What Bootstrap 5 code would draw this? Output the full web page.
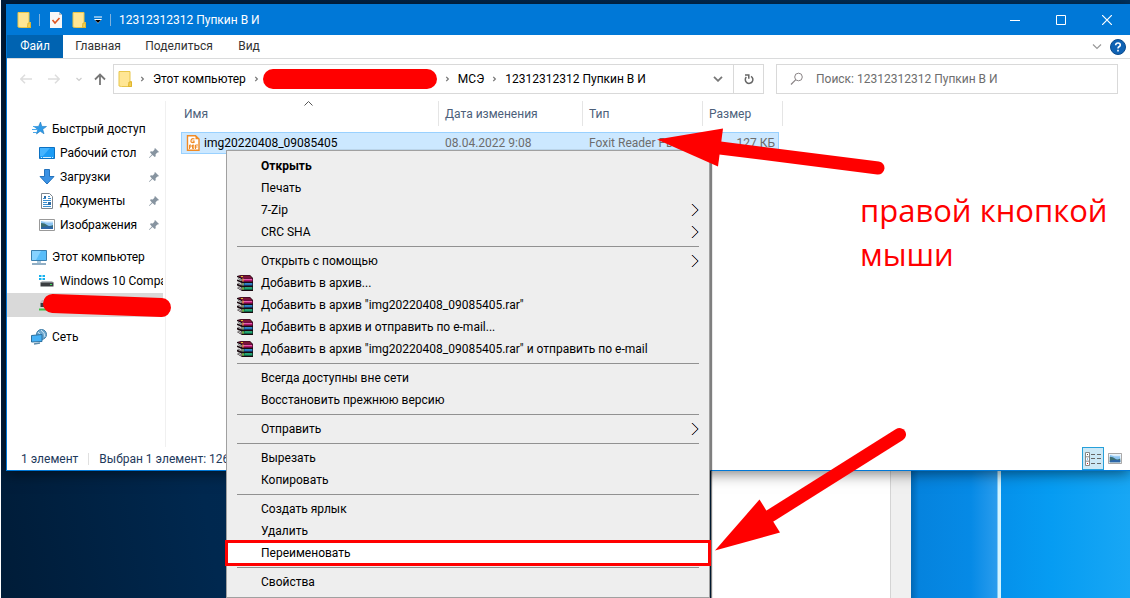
<!DOCTYPE html>
<html lang="ru">
<head>
<meta charset="utf-8">
<meta name="viewport" content="width=device-width, initial-scale=1">
<title>12312312312 Пупкин В И</title>
<link href="https://cdn.jsdelivr.net/npm/bootstrap@5.3.0/dist/css/bootstrap.min.css" rel="stylesheet">
<script src="https://cdn.jsdelivr.net/npm/bootstrap@5.3.0/dist/js/bootstrap.bundle.min.js"></script>
<style>
  body { font-family: Roboto, "Open Sans", sans-serif; font-size: 12px; line-height: 16px; color: #000; }
  a { color: inherit; text-decoration: none; }
  svg { display: block; flex: none; }
  button { border: 0; background: none; padding: 0; color: inherit; }

  .desktop { min-height: 100vh; background: linear-gradient(90deg, #001d3d, #003463); border-left: 1px solid #fff; padding-top: 4px; }
  .explorer { margin-left: 5px; background: #fff; border: solid #0078d7; border-width: 0 0 1px 1px; box-shadow: 0 2px 14px rgba(0, 0, 0, .55); z-index: 1; }

  .titlebar { height: 31px; background: #0078d7; color: #fff; padding-left: 10px; }
  .titlebar .tick { width: 1px; height: 12px; background: #7fb2de; }
  .win-btn { width: 46px; height: 31px; }

  .ribbon { height: 24px; border-bottom: 1px solid #dadbdc; color: #333; }
  .ribbon a { line-height: 23px; text-align: center; }
  .tab-file { width: 56px; background: #0063b1; color: #fff; }
  .tab-home { width: 70px; }
  .tab-share { width: 92px; }
  .tab-view { width: 48px; }

  .addressrow { padding: 5px 12px 7px 11px; }
  .arrows { width: 95px; padding-left: 2px; }
  .pathbox { height: 30px; width: 651px; border: 1px solid #d9d9d9; }
  .pathbox .refresh { width: 30px; border-left: 1px solid #d9d9d9; }
  .pathbox .drop { width: 30px; }
  .redacted { width: 174px; height: 20px; border-radius: 10px; background: #f00; }
  .searchbox { height: 30px; border: 1px solid #d9d9d9; margin-left: 12px; padding-left: 13px; }
  .searchbox input { border: 0; outline: 0; padding: 0; color: #6d6d6d; background: none; }
  .searchbox input::placeholder { color: #6d6d6d; opacity: 1; }

  .navpane { width: 159px; border-right: 1px solid #f0f0f0; padding-top: 16px; }
  .navpane ul { margin: 0 0 8px; }
  .navpane li { height: 24px; padding-left: 24px; margin-right: 2px; overflow: hidden; white-space: nowrap; }
  .navpane li.sub { padding-left: 32px; }
  .navpane li.current { background: #d9d9d9; }
  .navpane li a { margin-left: 5px; }
  .navpane .pin { width: 10px; margin-right: 4px; }

  .files { width: 602px; table-layout: fixed; margin-left: 15px; border-collapse: separate; border-spacing: 0; }
  .files th { height: 25px; padding: 0 6px; font-weight: 400; color: #4c607a; border-right: 1px solid #e5e5e5; position: relative; }
  .files th:first-child { padding-left: 3px; }
  .files .sort { position: absolute; left: 50%; top: 0; margin-left: -6px; }
  .files .spacer td { height: 6px; padding: 0; }
  .files .picked td { height: 22px; padding: 0 6px; color: #6d6d6d; background: #cce8ff; border: solid #99d1ff; border-width: 1px 0; }
  .files .picked td:first-child { border-left-width: 1px; color: #000; padding-left: 4px; }
  .files .picked td.size { border-right-width: 1px; padding-right: 3px; }
  .files .picked td.rest { background: none; border: 0; padding: 0; }

  .statusbar { height: 23px; color: #1e395b; padding-left: 14px; }
  .statusbar .rule { width: 1px; height: 12px; background: #e0e0e0; margin: 0 10px; }
  .view-btn { width: 22px; height: 23px; }
  .view-btn.on { background: #cce8f6; border: 1px solid #26a0da; }

  .behind { height: 127px; }
  .night { width: 710px; background: linear-gradient(80deg, #001c38, #00284f 30%, #00305c); }
  .page-edge { width: 180px; background: #fff; border-right: 1px solid #d4d4d4; }
  .scroller { width: 20px; background: #f0f0f0; }
  .glow { background: linear-gradient(90deg, #0168b5 0, #0583de 8px, #068ae6 60px, #2a9ced 86px, #d3f4ff 87px, #d3f4ff 90px, #0591eb 90px, #069cf2 140px, #18a7f5 100%); }

  .ctx { position: absolute; left: 226px; top: 150px; width: 484px; padding: 4px 0; background: #eee; border: 1px solid #a0a0a0; box-shadow: 2px 0 1px rgba(0, 0, 0, .5); z-index: 2; }
  .ctx button { display: flex; align-items: center; width: 100%; height: 22px; padding: 0 10px; text-align: left; white-space: nowrap; }
  .ctx .pic { width: 24px; flex: none; }
  .ctx hr { margin: 3px 10px; border-top: 1px solid #919191; opacity: 1; }
  .ctx .marked { background: #fff; outline: 3px solid #f00; outline-offset: -1px; }

  .note { position: absolute; left: 860px; top: 188px; width: 270px; font-family: "Open Sans", sans-serif; font-size: 31px; line-height: 44px; color: #f00; z-index: 3; }
  .mark-over { position: absolute; z-index: 3; }
  .mark-nav { left: 42px; top: 293px; }
  .mark-top { left: 650px; top: 120px; }
  .mark-low { left: 710px; top: 420px; }
</style>
</head>
<body>

<svg width="0" height="0" class="position-absolute" aria-hidden="true">
  <defs>
    <symbol id="folder" viewBox="0 0 14 16">
      <path d="M1 .5h11v10h1.500V15.500H3.500L1 15z" fill="#ffe694" stroke="#e8c64b"/>
      <path d="M11 11h2.500v4.500h-3z" fill="#f4cf53" stroke="#dfb530"/>
    </symbol>
    <symbol id="crumb" viewBox="0 0 6 8"><path d="M1.500 1.500 4 4 1.500 6.500" fill="none" stroke="#777" stroke-width="1.500"/></symbol>
    <symbol id="pinned" viewBox="0 0 10 10"><path d="M6 0l4 4-1 .6-.6-.2L6.600 6.200l.1 2-1 .8-2.200-2L.4 10l-.4-.4L2.900 6.400 1 4.300l.8-1 2 .1L5.600 1.600 5.400 1z" fill="#8794a0"/></symbol>
    <symbol id="more" viewBox="0 0 8 14">
      <path d="M.5 1l6 6-6 6" fill="none" stroke="#e8a25c"/>
      <path d="M1.500 1l6 6-6 6" fill="none" stroke="#5aa9e8"/>
      <path d="M1 1l6 6-6 6" fill="none" stroke="#3a2a3c"/>
    </symbol>
    <symbol id="books" viewBox="0 0 16 16">
      <path d="M0 1 4 0h9l3 3v13H5L0 13z" fill="#1a0a10"/>
      <path d="M1 1l3-.5h9L15 3H5z" fill="#7c1238"/>
      <path d="M0 2l4.500 2v2L0 4.500zM0 6l4.500 2v2.500L0 8.500zM0 10.500 4.500 12.500V15L0 12.500z" fill="#e9e9e9"/>
      <path d="M1 3.500l3 1.500M1 8l3 1.500M1 12l3 1.500" stroke="#333" stroke-width=".7"/>
      <path d="M5 3.500h10.500v3H5z" fill="#b3156c"/><path d="M6 4h9v1H6z" fill="#e25fae"/>
      <path d="M5 8h10.500v2.500H5z" fill="#1560a8"/><path d="M8 8.500h7v.8H8z" fill="#57aee8"/>
      <path d="M5 12.200h10.500v2.500H5z" fill="#0d8a5c"/><path d="M8 12.500h7v.8H8z" fill="#4fd6a0"/>
      <path d="M5.500 3.500h1v3h-1zM5.500 8h1v2.500h-1zM5.500 12.200h1v2.500h-1zM4 1h2v1H4z" fill="#d9c52c"/>
    </symbol>
    <symbol id="photo" viewBox="0 0 16 12">
      <path d="M.5.5h15v11H.5z" fill="#fff" stroke="#999"/>
      <path d="M2 2h12v8H2z" fill="#8cc4f2"/><path d="M2 4q4 0 6 2t6 0v4H2z" fill="#3d6f72"/><path d="M2 8.500q6-2 12-.5v2H2z" fill="#2c66a8"/><path d="M2 2h12v1.500H7z" fill="#d9edfb"/>
    </symbol>
  </defs>
</svg>

<div class="desktop position-relative d-flex flex-column overflow-hidden">
  <main class="explorer position-relative d-flex flex-column flex-grow-1">

    <header class="titlebar d-flex align-items-center">
      <svg width="14" height="16"><use href="#folder"/></svg>
      <span class="tick ms-2"></span>
      <svg class="ms-2 me-2" width="16" height="16" viewBox="0 0 16 16"><path d="M2 0h9l3 3v13H2z" fill="#f7f7f7"/><path d="M11 0v3h3" fill="#bbb"/><path d="M4.500 8l2.500 3 4.500-5" fill="none" stroke="#e0531f" stroke-width="1.600"/></svg>
      <svg width="14" height="16"><use href="#folder"/></svg>
      <svg class="ms-2" width="8" height="8" viewBox="0 0 8 8"><path d="M0 1h8" stroke="#fff"/><path d="M0 3h8L4 7.500z" fill="#fff"/><path d="M1 4h6L4 7z" fill="#000"/></svg>
      <span class="tick mx-2"></span>
      <span>12312312312 Пупкин В И</span>
      <div class="d-flex ms-auto">
        <button class="win-btn d-flex align-items-center justify-content-center" aria-label="Свернуть"><svg width="10" height="10"><path d="M0 5.500h10" stroke="#fff"/></svg></button>
        <button class="win-btn d-flex align-items-center justify-content-center" aria-label="Развернуть"><svg width="10" height="10"><path d="M.5.5h9v9h-9z" fill="none" stroke="#fff"/></svg></button>
        <button class="win-btn d-flex align-items-center justify-content-center" aria-label="Закрыть"><svg width="10" height="10"><path d="M0 0l10 10M10 0 0 10" stroke="#fff" stroke-width="1.200"/></svg></button>
      </div>
    </header>

    <nav class="ribbon d-flex">
      <a href="#" class="tab-file">Файл</a>
      <a href="#" class="tab-home">Главная</a>
      <a href="#" class="tab-share">Поделиться</a>
      <a href="#" class="tab-view">Вид</a>
      <div class="d-flex align-items-center gap-2 ms-auto me-1">
        <button aria-label="Свернуть ленту"><svg width="10" height="6"><path d="M1 .5l4 4 4-4" fill="none" stroke="#999" stroke-width="1.200"/></svg></button>
        <button aria-label="Справка"><svg width="16" height="16" viewBox="0 0 16 16"><circle cx="8" cy="8" r="7.500" fill="#0f62b4" stroke="#0b4a8c"/><path d="M5.600 6.200Q5.800 4 8 4t2.300 2Q10.300 7.100 9 7.800 8 8.400 8 9.500M8 10.800v1.700" fill="none" stroke="#fff" stroke-width="1.600"/></svg></button>
      </div>
    </nav>

    <div class="addressrow d-flex">
      <div class="arrows d-flex align-items-center">
        <button aria-label="Назад"><svg width="12" height="10"><path d="M12 5H1M5 .7.8 5 5 9.300" fill="none" stroke="#ddd" stroke-width="1.500"/></svg></button>
        <button class="ms-3" aria-label="Вперёд"><svg width="12" height="10"><path d="M0 5h11M7 .7 11.200 5 7 9.300" fill="none" stroke="#ddd" stroke-width="1.500"/></svg></button>
        <button class="ms-3" aria-label="Последние расположения"><svg width="6" height="5"><path d="M.5 1 3 3.500 5.500 1" fill="none" stroke="#ccc" stroke-width="1.200"/></svg></button>
        <button class="ms-2 ps-1" aria-label="Вверх"><svg width="12" height="12"><path d="M6 12V1.500M1 6.500 6 1.500l5 5" fill="none" stroke="#777" stroke-width="1.800"/></svg></button>
      </div>
      <div class="pathbox d-flex align-items-center flex-shrink-0">
        <svg class="ms-1" width="14" height="16"><use href="#folder"/></svg>
        <svg class="ms-2 me-2" width="5" height="8"><use href="#crumb"/></svg>
        <a href="#">Этот компьютер</a>
        <svg class="ms-2" width="5" height="8"><use href="#crumb"/></svg>
        <span class="redacted ms-1"></span>
        <svg class="mx-2" width="5" height="8"><use href="#crumb"/></svg>
        <a href="#">МСЭ</a>
        <svg class="mx-2" width="5" height="8"><use href="#crumb"/></svg>
        <a href="#">12312312312 Пупкин В И</a>
        <button class="drop ms-auto d-flex align-items-center justify-content-center" aria-label="Предыдущие расположения"><svg width="10" height="6"><path d="M1 .8l4 4 4-4" fill="none" stroke="#777" stroke-width="1.800"/></svg></button>
        <button class="refresh align-self-stretch d-flex align-items-center justify-content-center" aria-label="Обновить"><svg width="10" height="12" viewBox="0 0 10 12"><path d="M7 3.300A3.800 3.800 0 1 1 2.300 4M1 2h3.800v3.800" fill="none" stroke="#666" stroke-width="1.500"/></svg></button>
      </div>
      <label class="searchbox d-flex align-items-center flex-grow-1">
        <svg width="14" height="14" viewBox="0 0 14 14"><circle cx="8.500" cy="5" r="3.800" fill="none" stroke="#8a8486"/><path d="M5.800 7.700 1 12.500" stroke="#8a8486" stroke-width="1.200"/></svg>
        <input class="flex-grow-1 ms-2 ps-1" type="text" placeholder="Поиск: 12312312312 Пупкин В И" aria-label="Поиск">
      </label>
    </div>

    <div class="d-flex flex-grow-1">
      <nav class="navpane flex-shrink-0">
        <ul class="list-unstyled">
          <li class="d-flex align-items-center"><svg width="16" height="16" viewBox="0 0 16 16"><path d="M9.500 1l1.300 4.400 4.700.1-3.800 2.800 1.300 4.500-3.800-2.600L5.500 13l1.300-4.600L3 5.600l4.600-.2z" fill="#2f9be8" stroke="#1c78c0" stroke-width=".6"/><path d="M2 5.500h4M1 8.500h6M2 11.500h4" stroke="#4aa8ea" stroke-width="1.200"/></svg><a href="#">Быстрый доступ</a></li>
          <li class="sub d-flex align-items-center"><svg width="16" height="12"><path d="M.5.5h15v11H.5z" fill="#1c9cf5" stroke="#0c71c2"/><path d="M1 1h10L4 9H1z" fill="#45b4ff"/><path d="M2 10.500h1M4 10.500h8M13 10.500h1" stroke="#d8f0ff"/></svg><a href="#">Рабочий стол</a><svg class="pin ms-auto" height="10"><use href="#pinned"/></svg></li>
          <li class="sub d-flex align-items-center"><svg width="16" height="16"><path d="M5.500.5h5v7h4.500L8 15 1 7.500h4.500z" fill="#3b92e4" stroke="#2473bd"/></svg><a href="#">Загрузки</a><svg class="pin ms-auto" height="10"><use href="#pinned"/></svg></li>
          <li class="sub d-flex align-items-center"><svg width="16" height="16"><path d="M2.500.5h8l3 3v12h-11z" fill="#fff" stroke="#7d8790"/><path d="M4 5.500h3M4 7.500h8M9 3.500h2M9 5.500h3M4 9.500h4M4 11.500h8M4 13.500h8" stroke="#3a8fd0"/><path d="M9 9h3v3H9zM5 3h2v2H5z" fill="#2b6ca5"/></svg><a href="#">Документы</a><svg class="pin ms-auto" height="10"><use href="#pinned"/></svg></li>
          <li class="sub d-flex align-items-center"><svg width="16" height="12"><use href="#photo"/></svg><a href="#">Изображения</a><svg class="pin ms-auto" height="10"><use href="#pinned"/></svg></li>
        </ul>
        <ul class="list-unstyled">
          <li class="d-flex align-items-center"><svg width="16" height="15"><path d="M.5.5h15v10H.5z" fill="#59bdf9" stroke="#3b7fae"/><path d="M1 1h9L5 10H1z" fill="#86d2ff"/><path d="M6 11h4v2H6z" fill="#a9c8dd"/><path d="M1 14h14" stroke="#6d93b0" stroke-width="1.500"/></svg><a href="#">Этот компьютер</a></li>
          <li class="sub d-flex align-items-center"><svg width="16" height="14"><path d="M0 1h2.500v2H0zM3.500 1H6v2H3.500zM0 4h2.500v2H0zM3.500 4H6v2H3.500z" fill="#15b1ee"/><path d="M3 7h10l2 2H1z" fill="#b8bcc0"/><path d="M1.500 8.500h13v4h-13z" fill="#3a3d40"/><path d="M11 10h2v1h-2z" fill="#3be05a"/></svg><a href="#">Windows 10 Compact</a></li>
          <li class="sub current d-flex align-items-center"><svg width="16" height="14"><path d="M3 2h10l2 3H1z" fill="#b8bcc0"/><path d="M1.500 5h13v4h-13z" fill="#3a3d40"/><path d="M0 10.500h16v2H0z" fill="#3fbf4b"/></svg></li>
        </ul>
        <ul class="list-unstyled">
          <li class="d-flex align-items-center"><svg width="16" height="16"><circle cx="10.500" cy="5.500" r="5" fill="#6fa9cf" stroke="#3f7da8"/><path d="M7 3q3 2 3 6M10 1q4 3 4 7" fill="none" stroke="#cde6f5"/><path d="M.5 6.500 11 5.500v7L.5 13z" fill="#46b1f5" stroke="#2a6f9e"/><path d="M3 15l6-1" stroke="#5d8bab" stroke-width="1.300"/></svg><a href="#">Сеть</a></li>
        </ul>
      </nav>

      <section class="flex-grow-1">
        <table class="files">
          <colgroup><col style="width:258px"><col style="width:144px"><col style="width:120px"><col style="width:76px"><col style="width:4px"></colgroup>
          <thead>
            <tr>
              <th>Имя<svg class="sort" width="9" height="5"><path d="M.5 4.500l4-4 4 4" fill="none" stroke="#555"/></svg></th>
              <th>Дата изменения</th><th>Тип</th><th colspan="2">Размер</th>
            </tr>
          </thead>
          <tbody>
            <tr class="spacer"><td colspan="5"></td></tr>
            <tr class="picked">
              <td><div class="d-flex align-items-center"><svg width="14" height="16" viewBox="0 0 14 16"><path d="M1.500.7h8L13 4v11.300H1.500z" fill="#fff" stroke="#f08a24" stroke-width="1.400"/><path d="M9.500.5v3.800H13" fill="#f08a24"/><path d="M8.500 4Q5.500 3 5 5.500T8 7.500V6H6.500" fill="none" stroke="#f08a24" stroke-width="1.200"/><path d="M3.500 14v-4h1.500v2H3.500M6.500 10v3.500h1.300V10zM9.500 14v-4H12M9.500 12h2" fill="none" stroke="#f08a24"/></svg><span class="ms-1">img20220408_09085405</span></div></td>
              <td>08.04.2022 9:08</td><td class="text-nowrap">Foxit Reader PD...</td><td class="size text-end">127 КБ</td><td class="rest"></td>
            </tr>
          </tbody>
        </table>
      </section>
    </div>

    <footer class="statusbar d-flex align-items-center">
      <span>1 элемент</span><span class="rule"></span><span>Выбран 1 элемент: 126 КБ</span>
      <div class="d-flex align-items-center gap-1 ms-auto me-2">
        <button class="view-btn on d-flex align-items-center justify-content-center" aria-label="Таблица"><svg width="16" height="14"><path d="M.5.500h4v13h-4zM.5 4.800h4M.5 9.200h4" fill="#fff" stroke="#888"/><path d="M2 2.500h1" stroke="#555"/><path d="M2 7h1" stroke="#37c"/><path d="M2 11.500h1" stroke="#c22"/><path d="M6 2.500h4M12 2.500h4M6 6.500h4M12 6.500h4M6 11.500h4M12 11.500h4" stroke="#666"/></svg></button>
        <button aria-label="Крупные значки"><svg width="14" height="11" viewBox="0 0 16 12" preserveAspectRatio="none"><use href="#photo"/></svg></button>
      </div>
    </footer>
  </main>

  <div class="behind d-flex">
    <div class="night flex-shrink-0"></div>
    <div class="page-edge flex-shrink-0"></div>
    <div class="scroller flex-shrink-0"></div>
    <div class="glow flex-grow-1"></div>
  </div>
</div>

<div class="ctx" role="menu">
  <button role="menuitem"><span class="pic"></span><b>Открыть</b></button>
  <button role="menuitem"><span class="pic"></span>Печать</button>
  <button role="menuitem"><span class="pic"></span>7-Zip<svg class="ms-auto" width="8" height="14"><use href="#more"/></svg></button>
  <button role="menuitem"><span class="pic"></span>CRC SHA<svg class="ms-auto" width="8" height="14"><use href="#more"/></svg></button>
  <hr>
  <button role="menuitem"><span class="pic"></span>Открыть с помощью<svg class="ms-auto" width="8" height="14"><use href="#more"/></svg></button>
  <button role="menuitem"><span class="pic"><svg width="16" height="16"><use href="#books"/></svg></span>Добавить в архив...</button>
  <button role="menuitem"><span class="pic"><svg width="16" height="16"><use href="#books"/></svg></span>Добавить в архив "img20220408_09085405.rar"</button>
  <button role="menuitem"><span class="pic"><svg width="16" height="16"><use href="#books"/></svg></span>Добавить в архив и отправить по e-mail...</button>
  <button role="menuitem"><span class="pic"><svg width="16" height="16"><use href="#books"/></svg></span>Добавить в архив "img20220408_09085405.rar" и отправить по e-mail</button>
  <hr>
  <button role="menuitem"><span class="pic"></span>Всегда доступны вне сети</button>
  <button role="menuitem"><span class="pic"></span>Восстановить прежнюю версию</button>
  <hr>
  <button role="menuitem"><span class="pic"></span>Отправить<svg class="ms-auto" width="8" height="14"><use href="#more"/></svg></button>
  <hr>
  <button role="menuitem"><span class="pic"></span>Вырезать</button>
  <button role="menuitem"><span class="pic"></span>Копировать</button>
  <hr>
  <button role="menuitem"><span class="pic"></span>Создать ярлык</button>
  <button role="menuitem"><span class="pic"></span>Удалить</button>
  <button role="menuitem" class="marked"><span class="pic"></span>Переименовать</button>
  <hr>
  <button role="menuitem"><span class="pic"></span>Свойства</button>
</div>

<div class="note">правой кнопкой<br>мыши</div>
<svg class="mark-over mark-nav" width="130" height="26"><path d="M10.500 10.500l109 4" stroke="#f00" stroke-width="19" stroke-linecap="round"/></svg>
<svg class="mark-over mark-top" width="240" height="60"><path d="M70 28l158 20" stroke="#f00" stroke-width="13" stroke-linecap="round"/><path d="M7 19.500l66-11-5 38z" fill="#f00"/></svg>
<svg class="mark-over mark-low" width="200" height="136"><path d="M60 96 189.500 14.500" stroke="#f00" stroke-width="13" stroke-linecap="round"/><path d="M5 130.500l44.500-51 20.500 33z" fill="#f00"/></svg>
</body>
</html>
